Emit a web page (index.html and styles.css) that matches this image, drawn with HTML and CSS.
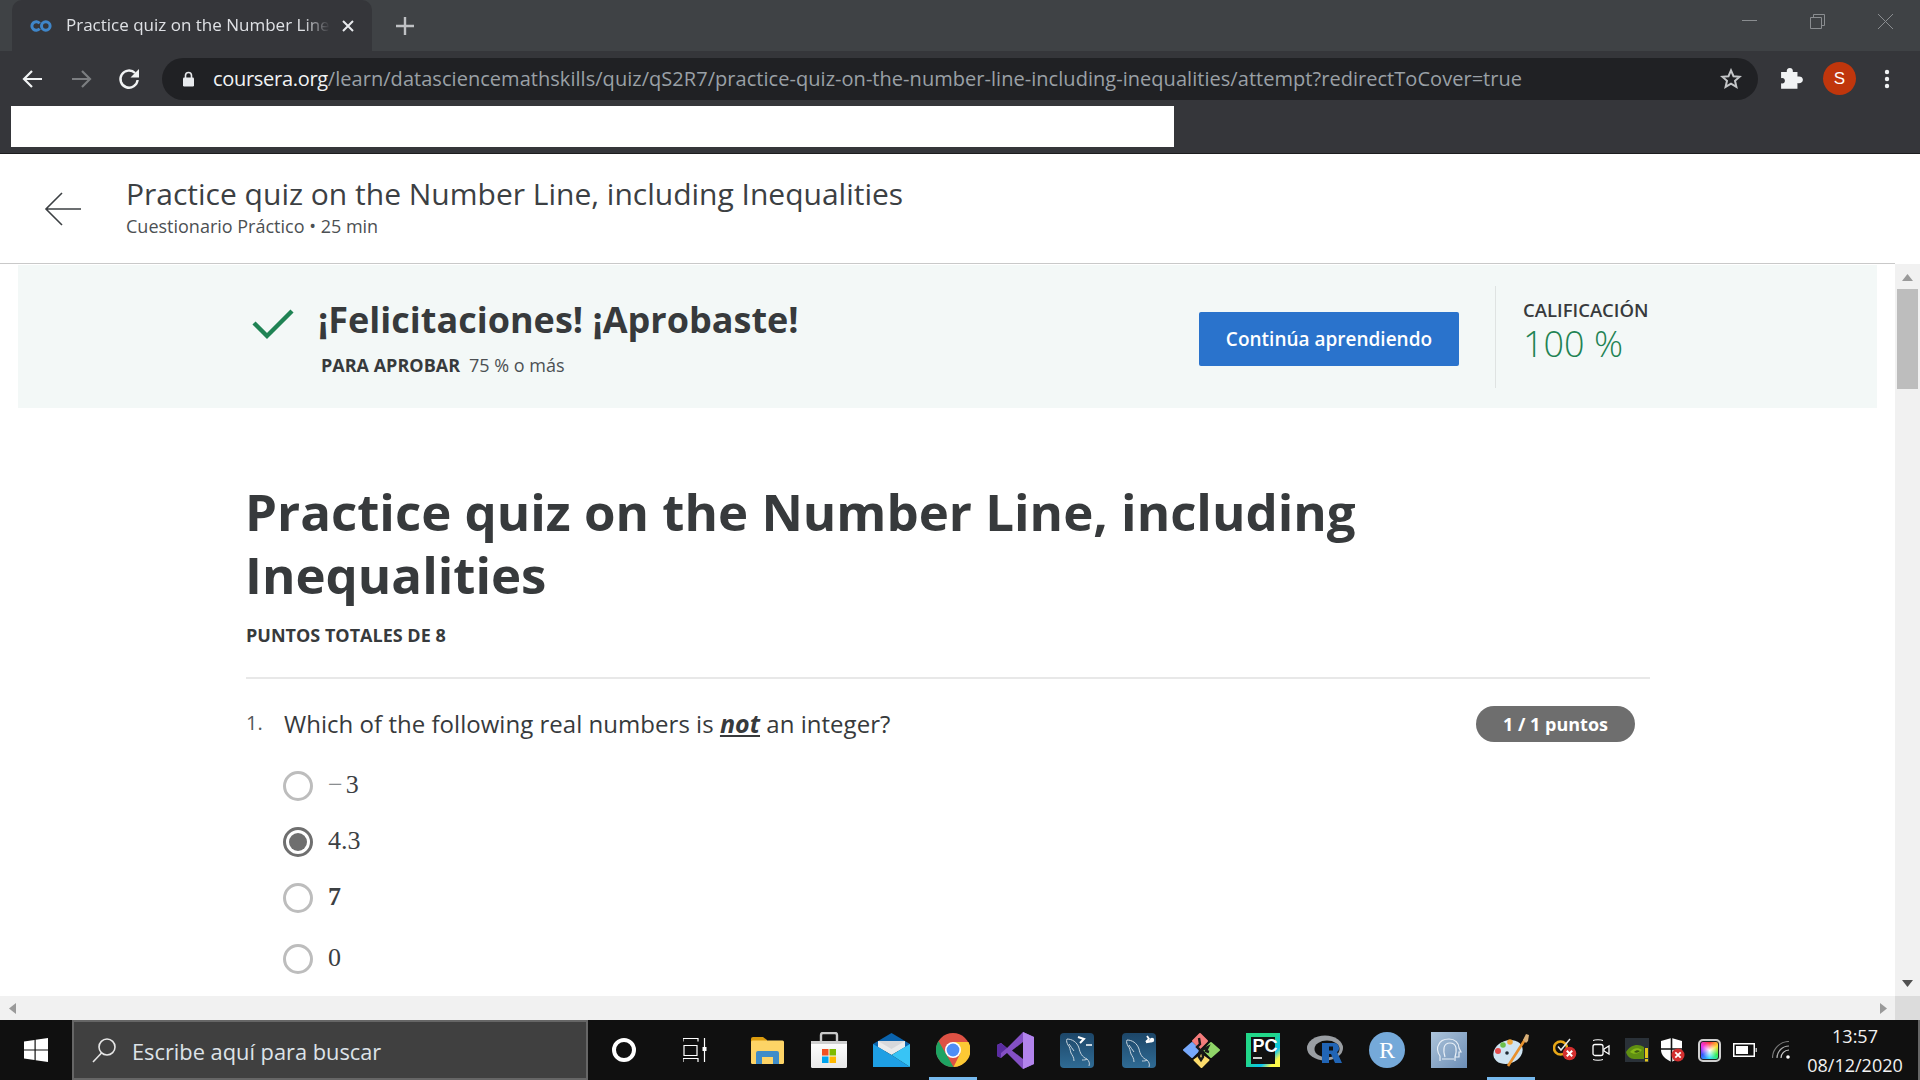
FILE: index.html
```html
<!DOCTYPE html>
<html lang="es">
<head>
<meta charset="utf-8">
<title>Practice quiz on the Number Line</title>
<link rel="stylesheet" href="styles.css">
</head>
<body>
<div class="screen">
  <div class="tabstrip">
    <div class="tab">
      <svg class="favicon" width="22" height="14" viewBox="0 0 22 14"><path d="M9.600 4.400A4.300 4.300 0 1 0 9.600 9.600" fill="none" stroke="#3f86c9" stroke-width="3"/><circle cx="15.800" cy="7" r="4.300" fill="none" stroke="#3f86c9" stroke-width="3"/></svg>
      <span class="tab-title">Practice quiz on the Number Line</span>
      <svg class="tab-close" width="12" height="12" viewBox="0 0 12 12"><path d="M1 1l10 10M11 1L1 11" stroke="#e8eaed" stroke-width="2"/></svg>
    </div>
    <svg class="new-tab" width="18" height="18" viewBox="0 0 18 18"><path d="M9 0v18M0 9h18" stroke="#bfc1c4" stroke-width="2.400"/></svg>
    <div class="window-controls">
      <svg width="15" height="15" viewBox="0 0 15 15"><path d="M0 6.500h15" stroke="#8a8d90" stroke-width="1"/></svg>
      <svg width="15" height="15" viewBox="0 0 15 15"><path d="M.5 3.500h11v11H.5zM3.500 3V.5h11v11H12" fill="none" stroke="#8a8d90"/></svg>
      <svg width="15" height="15" viewBox="0 0 15 15"><path d="M0 0l15 15M15 0L0 15" stroke="#8a8d90"/></svg>
    </div>
  </div>
  <div class="navbar">
    <svg class="nav-btn" width="22" height="20" viewBox="0 0 22 20"><path d="M20 10H3M10 2l-8 8 8 8" fill="none" stroke="#f1f3f4" stroke-width="2.200"/></svg>
    <svg class="nav-btn" width="22" height="20" viewBox="0 0 22 20"><path d="M2 10h17M12 2l8 8-8 8" fill="none" stroke="#7c7e81" stroke-width="2.200"/></svg>
    <svg class="nav-btn" width="22" height="22" viewBox="0 0 22 22"><path d="M19.600 12a8.600 8.600 0 1 1-2.500-7" fill="none" stroke="#f1f3f4" stroke-width="2.400"/><path d="M21 1v8.500h-8.500z" fill="#f1f3f4"/></svg>
    <div class="omnibox">
      <svg class="lock" width="13" height="16" viewBox="0 0 13 16"><path d="M3.500 7V4.500a3 3 0 0 1 6 0V7" fill="none" stroke="#e8eaed" stroke-width="1.600"/><rect x="1" y="6.500" width="11" height="9" rx="1.200" fill="#e8eaed"/></svg>
      <span class="url"><span class="url-host">coursera.org</span>/learn/datasciencemathskills/quiz/qS2R7/practice-quiz-on-the-number-line-including-inequalities/attempt?redirectToCover=true</span>
      <svg class="star" width="22" height="21" viewBox="0 0 22 21"><path d="M11 2.400l2.500 5.800 6.200.5-4.700 4.100 1.400 6.100L11 15.600l-5.400 3.300L7 12.800 2.300 8.700l6.200-.5z" fill="none" stroke="#c4c6c8" stroke-width="2"/></svg>
    </div>
    <svg class="puzzle" width="24" height="24" viewBox="0 0 22 22"><path d="M9 1c2 0 3 1.300 2.800 3.600H16v4.200c2.600-.6 5 .4 5 2.900s-2.400 3.600-5 3V20H1v-5c2.200.6 3.500-.6 3.500-2.300S3.200 9.700 1 10.300V4.600h5.200C6 2.300 7 1 9 1z" fill="#f1f3f4"/></svg>
    <div class="avatar">S</div>
    <svg class="kebab" width="6" height="20" viewBox="0 0 6 20"><circle cx="3" cy="3" r="2.200" fill="#f1f3f4"/><circle cx="3" cy="10" r="2.200" fill="#f1f3f4"/><circle cx="3" cy="17" r="2.200" fill="#f1f3f4"/></svg>
  </div>
  <div class="bookmarks"><div class="bookmarks-mask"></div></div>

  <div class="viewport">
    <div class="page">
      <header class="course-header">
        <svg class="back-arrow" width="38" height="36" viewBox="0 0 38 36"><path d="M37 18H2M18 2L2 18l16 16" fill="none" stroke="#3c4043" stroke-width="1.600"/></svg>
        <div class="course-meta">
          <div class="course-title">Practice quiz on the Number Line, including Inequalities</div>
          <div class="course-sub">Cuestionario Práctico • 25 min</div>
        </div>
      </header>
      <section class="result-banner">
        <svg class="check" width="42" height="32" viewBox="0 0 42 32"><path d="M2 15l13 13L40 3" fill="none" stroke="#1f8354" stroke-width="4.400"/></svg>
        <div class="result-text">
          <div class="result-title">¡Felicitaciones! ¡Aprobaste!</div>
          <div class="result-pass"><strong>PARA APROBAR</strong><span>75 % o más</span></div>
        </div>
        <button class="continue-btn">Continúa aprendiendo</button>
        <div class="grade">
          <div class="grade-label">CALIFICACIÓN</div>
          <div class="grade-value">100 %</div>
        </div>
      </section>
      <main class="quiz">
        <h1 class="quiz-title">Practice quiz on the Number Line, including Inequalities</h1>
        <div class="quiz-total">PUNTOS TOTALES DE 8</div>
        <div class="question">
          <div class="question-head">
            <span class="question-num">1.</span>
            <span class="question-text">Which of the following real numbers is <em class="not">not</em> an integer?</span>
            <span class="points">1 / 1 puntos</span>
          </div>
          <div class="options">
            <div class="option"><span class="radio"></span><span class="math"><span class="math-minus">−</span>3</span></div>
            <div class="option"><span class="radio radio-on"></span><span class="math">4.3</span></div>
            <div class="option"><span class="radio"></span><span class="math math-bold">7</span></div>
            <div class="option option-last"><span class="radio"></span><span class="math">0</span></div>
          </div>
        </div>
      </main>
    </div>
    <div class="vscroll">
      <svg width="11" height="7" viewBox="0 0 11 7"><path d="M5.500 0L11 7H0z" fill="#9a9a9a"/></svg>
      <div class="vthumb"></div>
      <div class="vfill"></div>
      <svg width="11" height="7" viewBox="0 0 11 7"><path d="M5.500 7L0 0h11z" fill="#505050"/></svg>
    </div>
  </div>
  <div class="hscroll">
    <svg width="7" height="11" viewBox="0 0 7 11"><path d="M0 5.500L7 0v11z" fill="#9a9a9a"/></svg>
    <div class="hfill"></div>
    <svg width="7" height="11" viewBox="0 0 7 11"><path d="M7 5.500L0 0v11z" fill="#9a9a9a"/></svg>
    <div class="corner"></div>
  </div>

  <footer class="taskbar">
    <div class="start">
      <svg width="24" height="24" viewBox="0 0 24 24"><path d="M0 3.400l10.500-1.500v9.500H0zM11.700 1.700L24 0v11.400H11.700zM0 12.600h10.500v9.500L0 20.600zM11.700 12.600H24V24l-12.300-1.700z" fill="#fff"/></svg>
    </div>
    <div class="search">
      <svg width="26" height="26" viewBox="0 0 26 26"><circle cx="16" cy="10" r="8" fill="none" stroke="#e6e6e6" stroke-width="1.600"/><path d="M10.500 16L2 25" stroke="#e6e6e6" stroke-width="1.600"/></svg>
      <span>Escribe aquí para buscar</span>
    </div>
    <div class="cortana"></div>
    <svg class="taskview" width="24" height="24" viewBox="0 0 24 24"><path d="M0 3.500V.5h15v3M1 7.500h13v10H1zM0 24v-3.500h15V24M21.500 0v24" fill="none" stroke="#fff" stroke-width="1.200"/><rect x="19.500" y="9" width="4" height="4" fill="#fff"/></svg>

    <div class="apps">
      <div class="app">
        <svg width="33" height="27" viewBox="0 0 33 27"><path d="M0 2a2 2 0 0 1 2-2h10l4 3v4H0z" fill="#dc9c0e"/><rect y="3.500" width="33" height="23.500" rx="1.500" fill="#fdd466"/><path d="M5 27V16a2 2 0 0 1 2-2h19a2 2 0 0 1 2 2v11h-6v-7H11v7z" fill="#3f8cc8"/></svg>
      </div>
      <div class="app">
        <svg width="36" height="36" viewBox="0 0 36 36"><defs><linearGradient id="bag" x1="0" y1="0" x2="0" y2="1"><stop offset="0" stop-color="#fff"/><stop offset="1" stop-color="#e8e8e8"/></linearGradient></defs><path d="M10 9V3a2 2 0 0 1 2-2h12a2 2 0 0 1 2 2v6" fill="none" stroke="#c8c8c8" stroke-width="2.400"/><rect y="9" width="36" height="27" rx="1.500" fill="url(#bag)"/><rect y="9" width="36" height="3" fill="#cfcfcf"/><rect x="11" y="17" width="6.500" height="6.500" fill="#f25022"/><rect x="18.500" y="17" width="6.500" height="6.500" fill="#7fba00"/><rect x="11" y="24.500" width="6.500" height="6.500" fill="#00a4ef"/><rect x="18.500" y="24.500" width="6.500" height="6.500" fill="#ffb900"/></svg>
      </div>
      <div class="app">
        <svg width="37" height="34" viewBox="0 0 37 34"><path d="M0 11L18.500 0 37 11v7H0z" fill="#0a63ad"/><path d="M5 8h27v6L18.500 22 5 14z" fill="#e9ebec"/><path d="M5 8h27L18.500 16z" fill="#c9ccd0" opacity=".6"/><path d="M0 11l18.500 11L37 34H0z" fill="#1e9fe4"/><path d="M37 11L18.500 22 37 34z" fill="#38c4f5"/></svg>
      </div>
      <div class="app app-active">
        <svg width="34" height="34" viewBox="0 0 34 34"><circle cx="17" cy="17" r="17" fill="#dd5144"/><path d="M17 9h15.500a17 17 0 0 1-15 25l7-14z" fill="#fcc934"/><path d="M17 34A17 17 0 0 1 2.500 8L10 21l7.500 13z" fill="#1ea362"/><circle cx="17" cy="17" r="8" fill="#fff"/><circle cx="17" cy="17" r="6.400" fill="#4f8ef5"/></svg>
      </div>
      <div class="app">
        <svg width="37" height="37" viewBox="0 0 37 37"><path d="M26 0l11 5v27l-11 5L10 21l-6 5-4-2V13l4-2 6 5z" fill="#8450c4"/><path d="M26 0l11 5v27l-11 5z" fill="#b284ec"/><path d="M0 13l4-2v15l-4-2zM4 11l6 5-6 5z" fill="#5a2ca0"/><path d="M26 10v17l-11-8.500z" fill="#111"/></svg>
      </div>
      <div class="app">
        <svg width="34" height="35" viewBox="0 0 34 35"><defs><linearGradient id="sql" x1="0" y1="0" x2="0" y2="1"><stop offset="0" stop-color="#1d4668"/><stop offset="1" stop-color="#2f6b94"/></linearGradient></defs><rect width="34" height="35" rx="4" fill="url(#sql)"/><path d="M7 6c5 0 10 3 12 9 1 5 3 9 8 11 2 2 3 4 2 7M27 26c-1 1-3 1-5 1M7 6c-1 2 0 4 1 6 2 2 2 5 3 8 1 2 3 4 3 8M9 11c2 2 3 5 5 7" fill="none" stroke="#c6d3dd" stroke-width="1"/><path d="M18 4l6 2-4 4" fill="none" stroke="#fff" stroke-width="2"/><path d="M26 12h6" stroke="#fff" stroke-width="1.500"/></svg>
      </div>
      <div class="app">
        <svg width="34" height="35" viewBox="0 0 34 35"><rect width="34" height="35" rx="4" fill="url(#sql)"/><path d="M5 7c5 0 10 3 12 9 1 5 3 9 8 11 2 2 3 4 2 7M25 27c-1 1-3 1-5 1M5 7c-1 2 0 4 1 6 2 2 2 5 3 8 1 2 3 4 3 8M7 12c2 2 3 5 5 7" fill="none" stroke="#c6d3dd" stroke-width="1"/><path d="M24 9l6-1" stroke="#fff" stroke-width="2.600"/><path d="M25 3l2 3-3 3" fill="none" stroke="#fff" stroke-width="1.800"/><circle cx="30" cy="7" r="2.200" fill="#fff"/></svg>
      </div>
      <div class="app">
        <svg width="37" height="36" viewBox="0 0 37 36"><g stroke-linejoin="round" stroke-width="2"><path d="M10 9l7-7 7 7-7 7z" fill="#f47c7c" stroke="#f47c7c"/><path d="M9 11l7 7-7 7-8-7z" fill="#78a9fb" stroke="#78a9fb"/><path d="M28 11l8 7-8 7-7-7z" fill="#8fd468" stroke="#8fd468"/><path d="M18.500 23l7 5-7 7-7-7z" fill="#fddc6c" stroke="#fddc6c"/></g><path d="M16 6l1 6-3 3 3 3-1 7 2 3 2-3-1-7 6-3-2 4 3 1" fill="none" stroke="#191919" stroke-width="2.400"/></svg>
      </div>
      <div class="app">
        <svg width="34" height="34" viewBox="0 0 34 34"><defs><linearGradient id="pc" x1="0" y1="0" x2="1" y2="1"><stop offset=".45" stop-color="#21d789"/><stop offset=".7" stop-color="#07c3f2"/><stop offset=".85" stop-color="#fcf84a"/></linearGradient></defs><rect width="34" height="34" fill="url(#pc)"/><rect x="5" y="4" width="24" height="27" fill="#111"/><text class="pc-text" x="6.500" y="19">PC</text><rect x="7" y="24" width="9" height="2" fill="#d0d0d0"/></svg>
      </div>
      <div class="app">
        <svg width="36" height="30" viewBox="0 0 36 30"><ellipse cx="18" cy="13" rx="18" ry="12.500" fill="#9a9ea3"/><ellipse cx="20" cy="14" rx="12.500" ry="8.500" fill="#101010"/><path d="M15 8h12a5 5 0 0 1 3 9l5 11h-7l-4-9h-2v9h-7z" fill="#2165b6"/><rect x="22" y="11.500" width="4" height="4" fill="#101010"/></svg>
      </div>
      <div class="app">
        <div class="rstudio">R</div>
      </div>
      <div class="app">
        <svg width="36" height="36" viewBox="0 0 36 36"><defs><linearGradient id="hg" x1="0" y1="0" x2="1" y2="1"><stop offset="0" stop-color="#adc4da"/><stop offset="1" stop-color="#6c8eb6"/></linearGradient></defs><rect width="36" height="36" fill="url(#hg)"/><path d="M9 29v-5C6 20 6 15 7.500 13 9 9 13 7 18 7c6 0 10 4 10 9l2 4h-2v5h-4v4M14 25c-2-7-2-14 5-14s7 7 5 14M11 27h12" fill="none" stroke="#e8eff6" stroke-width="1.200"/></svg>
      </div>
      <div class="app app-active">
        <svg width="37" height="34" viewBox="0 0 37 34"><ellipse cx="15" cy="19" rx="15" ry="11.500" fill="#cfe4f2" transform="rotate(-20 15 19)"/><circle cx="5" cy="18" r="3" fill="#e44c4c"/><circle cx="10" cy="12" r="2.800" fill="#6cc04a"/><circle cx="17" cy="9" r="2.800" fill="#f0a63a"/><circle cx="14" cy="20" r="1.800" fill="#1d2a33"/><path d="M33 5L15 33" stroke="#e8912c" stroke-width="2.600"/><path d="M30 7l3-6 3 1-1 6-2 2z" fill="#d9b078"/></svg>
      </div>
    </div>

    <div class="tray">
      <div class="tray-item">
        <svg width="24" height="24" viewBox="0 0 24 24"><circle cx="7.500" cy="10" r="6.500" fill="none" stroke="#e8a717" stroke-width="2.600"/><path d="M5 8.500l3 3.500 9-11" fill="none" stroke="#e6e6e6" stroke-width="1.500"/><circle cx="16.500" cy="15.500" r="6.800" fill="#d32f2f"/><path d="M13.800 12.800l5.400 5.400M19.200 12.800l-5.400 5.400" stroke="#fff" stroke-width="2"/></svg>
      </div>
      <div class="tray-item">
        <svg width="18" height="24" viewBox="0 0 18 24"><rect x="1" y="6.500" width="10" height="11" rx="2" fill="none" stroke="#fff" stroke-width="1.300"/><path d="M12 11l5-3v8l-5-3z" fill="none" stroke="#fff" stroke-width="1.300"/><path d="M1 2.500c2-1 8-1 10 0M1 21.500c2 1 8 1 10 0" fill="none" stroke="#fff" stroke-width="1"/></svg>
      </div>
      <div class="tray-item">
        <svg width="24" height="24" viewBox="0 0 24 24"><rect width="24" height="24" fill="#2a3138"/><path d="M1 14c4-7 12-9 18-5v12H9c-4 0-7-3-8-7z" fill="#5f8f12"/><path d="M5 14c3-4 8-5 12-2-3 4-8 5-12 2z" fill="#86b818"/><path d="M9 14c2-2 4-2 6-1-2 2-4 2-6 1z" fill="#3c5a10"/><path d="M21.500 10v10" stroke="#e2c51c" stroke-width="3"/><path d="M21.500 21v2.500" stroke="#e2c51c" stroke-width="3"/></svg>
      </div>
      <div class="tray-item">
        <svg width="24" height="24" viewBox="0 0 24 24"><path d="M10.500 0L21 3v9c0 5-4 9-10.500 12C4 21 0 17 0 12V3z" fill="#fff"/><path d="M10.500 0v24M0 11h21" stroke="#111" stroke-width="1.600"/><circle cx="17" cy="17" r="6.500" fill="#d32f2f"/><path d="M14.300 14.300l5.400 5.400M19.700 14.300l-5.400 5.400" stroke="#fff" stroke-width="1.800"/></svg>
      </div>
      <div class="tray-item">
        <div class="color-tile"></div>
      </div>
      <div class="tray-item">
        <svg width="24" height="14" viewBox="0 0 24 14"><rect x=".75" y=".75" width="20.500" height="12.500" fill="none" stroke="#fff" stroke-width="1.500"/><rect x="3" y="3" width="12" height="8" fill="#fff"/><rect x="22.500" y="5" width="1.500" height="4" fill="#bbb"/></svg>
      </div>
      <div class="tray-item">
        <svg width="18" height="18" viewBox="0 0 18 18"><path d="M.5 17A16.500 16.500 0 0 1 17 .5" fill="none" stroke="#777" stroke-width="1.200"/><path d="M5 17A12 12 0 0 1 17 5" fill="none" stroke="#aaa" stroke-width="1.200"/><path d="M9 17a8 8 0 0 1 8-8" fill="none" stroke="#ccc" stroke-width="1.200"/><circle cx="16" cy="16" r="1.800" fill="#fff"/></svg>
      </div>
    </div>
    <div class="clock"><span>13:57</span><span>08/12/2020</span></div>
    <div class="show-desktop"></div>
  </footer>
</div>
</body>
</html>
```
FILE: styles.css
```css
* { box-sizing: border-box; }
html, body { margin: 0; padding: 0; }
body { font-family: "Open Sans", "Noto Sans", sans-serif; color: #373a3c; background: #fff; }
.screen { width: 1920px; height: 1080px; display: flex; flex-direction: column; overflow: hidden; }

/* browser chrome */
.tabstrip { height: 51px; flex: none; background: #3f4245; display: flex; align-items: center; padding-left: 12px; }
.tab { width: 360px; height: 51px; background: #35363a; border-radius: 10px 10px 0 0; display: flex; align-items: center; padding-left: 18px; }
.favicon { flex: none; }
.tab-title { width: 264px; margin-left: 14px; margin-top: -2px; font-size: 17px; color: #dfe1e5; white-space: nowrap; overflow: hidden;
  -webkit-mask-image: linear-gradient(to right, #000 90%, transparent 100%); mask-image: linear-gradient(to right, #000 90%, transparent 100%); }
.tab-close { flex: none; margin-left: 12px; }
.new-tab { margin-left: 24px; flex: none; }
.window-controls { margin-left: auto; display: flex; gap: 53px; padding-right: 27px; margin-top: -8px; }
.navbar { height: 55px; flex: none; background: #35363a; display: flex; align-items: center; padding-left: 22px; padding-right: 30px; }
.nav-btn { flex: none; margin-right: 26px; }
.omnibox { width: 1596px; height: 42px; margin-left: -4px; flex: none; border-radius: 21px; background: #202124; display: flex; align-items: center; padding-left: 20px; padding-right: 16px; }
.lock { flex: none; }
.url { margin-left: 18px; font-size: 20px; letter-spacing: 0.04px; color: #9aa0a6; white-space: nowrap; }
.url-host { color: #f1f3f4; letter-spacing: -0.3px; }
.star { margin-left: auto; flex: none; }
.puzzle { flex: none; margin-left: 22px; }
.avatar { flex: none; width: 33px; height: 33px; margin-left: 19px; border-radius: 50%; background: #c0360c; color: #fff; font-size: 17px; display: flex; align-items: center; justify-content: center; font-family: "Liberation Sans", sans-serif; }
.kebab { flex: none; margin-left: 28px; }
.bookmarks { height: 48px; flex: none; background: #35363a; border-bottom: 1px solid #1c1c1e; padding-left: 11px; }
.bookmarks-mask { width: 1163px; height: 41px; background: #fff; }

/* page */
.viewport { height: 842px; flex: none; display: flex; }
.page { flex: 1; min-width: 0; overflow: hidden; }
.course-header { height: 110px; display: flex; align-items: center; border-bottom: 1px solid #c9c9c9; padding-left: 44px; }
.back-arrow { flex: none; margin-right: 44px; }
.course-meta { margin-top: -5px; }
.course-title { font-size: 30px; line-height: 40px; color: #3c4043; }
.course-sub { font-size: 18px; line-height: 24px; color: #4c5053; }
.result-banner { height: 143px; margin: 1px 18px 0; background: #f3f8f7; display: flex; align-items: center; padding-left: 234px; }
.check { flex: none; margin-right: 24px; margin-top: -26px; }
.result-text { width: 881px; flex: none; margin-top: -2px; }
.result-title { font-size: 36px; font-weight: 700; line-height: 50px; }
.result-pass { margin-left: 3px; margin-top: 8px; display: flex; gap: 9px; font-size: 18px; line-height: 24px; }
.result-pass strong { font-weight: 700; }
.result-pass span { color: #4c5053; }
.continue-btn { flex: none; width: 260px; height: 54px; border: 0; border-radius: 2px; background: #2a73cc; color: #fff; font: 600 19px "Open Sans", sans-serif; margin-right: 36px; margin-top: 4px; }
.grade { height: 102px; border-left: 1px solid #dfe3e2; padding-left: 27px; }
.grade-label { font-size: 18.5px; font-weight: 600; line-height: 24px; margin-top: 12px; }
.grade-value { font-size: 36px; font-weight: 300; line-height: 44px; color: #1f8354; }
.quiz { padding: 72px 0 0 245px; width: 1650px; }
.quiz-title { margin: 0; font-size: 51px; font-weight: 700; line-height: 63px; color: #373a3c; }
.quiz-total { margin-top: 17px; margin-left: 1px; font-size: 18px; font-weight: 700; line-height: 24px; padding-bottom: 30px; border-bottom: 2px solid #e8e8e8; }
.question { padding-top: 27px; padding-left: 1px; }
.question-head { display: flex; align-items: center; height: 36px; }
.question-num { width: 38px; font-size: 20px; color: #55585a; margin-top: -4px; }
.question-text { font-size: 24px; letter-spacing: 0.03px; margin-top: -2px; }
.not { font-size: 25px; font-weight: 700; font-style: italic; text-decoration: underline; }
.points { margin-left: auto; margin-right: 15px; width: 159px; height: 36px; border-radius: 18px; background: #6e6e6e; color: #fff; font-size: 18px; font-weight: 700; display: flex; align-items: center; justify-content: center; }
.options { display: flex; flex-direction: column; gap: 26px; padding: 29px 0 0 37px; }
.option { height: 30px; display: flex; align-items: center; gap: 15px; }
.option-last { margin-top: 5px; }
.radio { width: 30px; height: 30px; flex: none; border-radius: 50%; border: 3px solid #bdbdbd; background: #fff; }
.radio-on { border-color: #6f6f6f; position: relative; }
.radio-on::after { content: ""; position: absolute; inset: 3px; border-radius: 50%; background: #6f6f6f; }
.math { font-family: "Liberation Serif", serif; font-size: 26px; line-height: 30px; color: #3c4043; margin-top: -3px; }
.math-minus { color: #8a8d90; margin-right: 3px; }
.math-bold { font-weight: 700; }

/* scrollbars */
.vscroll { width: 25px; flex: none; background: #f1f1f1; display: flex; flex-direction: column; align-items: center; padding: 10px 0 9px; margin-top: 110px; }
.vthumb { width: 21px; height: 100px; margin-top: 8px; background: #bdbdbd; }
.vfill { flex: 1; }
.hscroll { height: 24px; flex: none; background: #f1f1f1; display: flex; align-items: center; padding-left: 9px; }
.hfill { flex: 1; }
.corner { width: 25px; height: 24px; margin-left: 8px; background: #dcdcdc; }

/* taskbar */
.taskbar { height: 60px; flex: none; background: #101010; display: flex; align-items: center; color: #fff; }
.start { width: 72px; height: 60px; display: flex; align-items: center; justify-content: center; flex: none; }
.search { width: 516px; height: 60px; flex: none; background: #404040; border: 2px solid #666; display: flex; align-items: center; gap: 15px; padding-left: 17px; font-size: 21.8px; color: #dde3e8; }
.search span { margin-top: 2px; }
.cortana { width: 24px; height: 24px; flex: none; margin-left: 24px; border: 4px solid #fff; border-radius: 50%; }
.taskview { flex: none; margin-left: 47px; }
.apps { display: flex; margin-left: 29px; flex: none; }
.app { width: 62px; height: 60px; flex: none; display: flex; align-items: center; justify-content: center; position: relative; }
.app-active::after { content: ""; position: absolute; left: 7px; right: 7px; bottom: 0; height: 3px; background: #76b9ed; }
.pc-text { font: 700 18px "Liberation Sans", sans-serif; fill: #fff; }
.rstudio { width: 36px; height: 36px; border-radius: 50%; background: #75a9d9; color: #fff; font: 24px/36px "Liberation Serif", serif; text-align: center; }
.tray { display: flex; margin-left: 5px; flex: none; }
.tray-item { width: 36px; height: 60px; display: flex; align-items: center; justify-content: center; flex: none; }
.color-tile { width: 23px; height: 23px; border-radius: 5px; border: 2px solid #cfcfcf; box-shadow: inset 0 0 0 1px #222; background: radial-gradient(circle, #fff 0, rgba(255,255,255,0) 60%), conic-gradient(#f33, #fd3, #3e5, #3df, #35f, #e3e, #f33); }
.clock { width: 112px; flex: none; margin-left: 0; padding-top: 2px; display: flex; flex-direction: column; align-items: center; font-size: 18px; line-height: 29px; color: #f2f2f2; }
.show-desktop { margin-left: auto; width: 2px; height: 60px; background: #666; flex: none; }
```
